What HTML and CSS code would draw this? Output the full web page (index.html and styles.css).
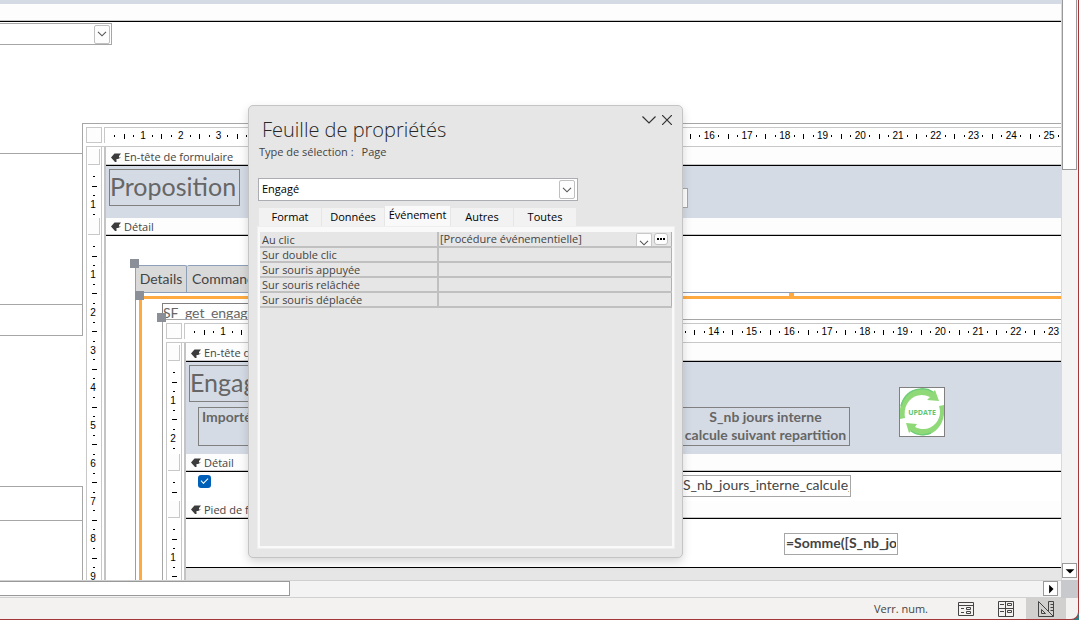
FILE: index.html
```html
<!DOCTYPE html>
<html lang="fr">
<head>
<meta charset="utf-8">
<title>Feuille de propriétés</title>
<link rel="stylesheet" href="styles.css">
</head>
<body>
<svg class="defs" aria-hidden="true">
  <symbol id="chevron" viewBox="0 0 10 6"><path d="M1 .8 5 4.8 9 .8" fill="none" stroke="#555" stroke-width="1.1"/></symbol>
  <symbol id="section-arrow" viewBox="0 0 10 9"><path d="M0 4.500 3.500.500H10L8 3v1.500H10L7 6H5.500V9H4Z" fill="#3c3c3c"/></symbol>
</svg>
<div class="app">
  <div class="workspace">
    <main class="canvas">
      <div class="outer-header"></div>
      <div class="band"></div>
      <div class="outer-body">
        <label class="combo outer-combo"><select aria-label="Filtre"><option></option></select><span class="combo-button"><svg><use href="#chevron"/></svg></span></label>
        <div class="group group-a"></div>
        <div class="group group-b"></div>

        <div class="subform proposition">
          <div class="ruler-row"><div class="corner"></div><div class="h-ruler" data-count="25"></div></div>
          <section class="section first">
            <div class="v-ruler" data-count="1"><div class="selector"></div></div>
            <div class="section-main">
              <div class="band"><svg><use href="#section-arrow"/></svg>En-tête de formulaire</div>
              <div class="section-body tinted header-small">
                <div class="label title-label title-proposition">Proposition</div>
                <input class="field hidden-field" aria-label="Champ">
              </div>
            </div>
          </section>
          <section class="section fill">
            <div class="v-ruler" data-count="9"><div class="selector"></div></div>
            <div class="section-main">
              <div class="band"><svg><use href="#section-arrow"/></svg>Détail</div>
              <div class="section-body">
                <div class="tab-control">
                  <div class="form-tabs"><button>Details</button><button>Commandes</button></div>
                  <div class="tab-page">
                    <div class="label subform-label">SF_get_engagements</div>
                    <div class="subform engage">
                      <div class="ruler-row"><div class="corner"></div><div class="h-ruler" data-count="23"></div></div>
                      <section class="section first">
                        <div class="v-ruler" data-count="2"><div class="selector"></div></div>
                        <div class="section-main">
                          <div class="band"><svg><use href="#section-arrow"/></svg>En-tête de formulaire</div>
                          <div class="section-body tinted header-large">
                            <div class="label title-label title-engage">Engagé</div>
                            <div class="label bold-label imported">Importé</div>
                            <div class="label bold-label days">S_nb jours interne<br>calcule suivant repartition</div>
                            <button class="update" aria-label="Update">
                              <svg viewBox="0 0 44 48">
                                <path d="M0 31C-2 14 6 2 20 1 26 0 30 2 33 4L35 2 39 13 27 12 30 9C22 5 14 7 9 13 5 18 4 24 5 30Z" fill="#8fd978"/>
                                <path d="M44 17C46 33 38 45 26 47 19 48 14 46 11 43L9 45 6 35 17 36 15 39C23 43 31 41 36 35 40 30 41 24 39 18Z" fill="#8fd978"/>
                                <path d="M1 18C4 7 11 2 20 1 26 0 30 2 33 4M11 43C16 47 24 48 31 45" fill="none" stroke="#70ce7b" stroke-width="1.5"/>
                                <text x="22" y="27">UPDATE</text>
                              </svg>
                            </button>
                          </div>
                        </div>
                      </section>
                      <section class="section">
                        <div class="v-ruler" data-count="0"><div class="selector"></div></div>
                        <div class="section-main">
                          <div class="band"><svg><use href="#section-arrow"/></svg>Détail</div>
                          <div class="section-body detail-small">
                            <input type="checkbox" class="check" checked aria-label="Importé">
                            <input class="field days-field" value="S_nb_jours_interne_calcule_repartition" aria-label="Jours interne">
                          </div>
                        </div>
                      </section>
                      <section class="section fill">
                        <div class="v-ruler" data-count="1"><div class="selector"></div></div>
                        <div class="section-main past-end">
                          <div class="band"><svg><use href="#section-arrow"/></svg>Pied de formulaire</div>
                          <div class="section-body footer-body">
                            <input class="field sum-field" value="=Somme([S_nb_jours_interne])" aria-label="Somme">
                          </div>
                        </div>
                      </section>
                    </div>
                  </div>
                  <span class="drop-mark"></span>
                  <span class="handle handle-a"></span><span class="handle handle-b"></span><span class="handle handle-c"></span>
                </div>
              </div>
            </div>
          </section>
        </div>
      </div>
    </main>
    <div class="v-scroll"><div class="v-thumb"></div><button class="scroll-button" aria-label="Défiler vers le bas"><svg viewBox="0 0 8 8"><path d="M.5 2.500h7L4 6Z"/></svg></button></div>
    <div class="h-scroll"><div class="h-thumb"></div><button class="scroll-button" aria-label="Défiler vers la droite"><svg viewBox="0 0 8 8"><path d="M2.500.500v7L6 4Z"/></svg></button></div>
    <div class="scroll-corner"></div>
  </div>
  <footer class="status">
    <span class="status-text">Verr. num.</span>
    <button aria-label="Mode Formulaire"><svg viewBox="0 0 16 16"><path d="M.500 1.500h15v13H.500ZM.500 4.500h15M3 7.500h3M3 11.500h3M8.500 6.500h4v2h-4ZM8.500 10.500h4v2h-4Z"/></svg></button>
    <button aria-label="Mode Page"><svg viewBox="0 0 16 16"><path d="M.500.500h15v15H.500ZM7.500.500v15M.500 7.500h15M2 3.500h4M2 10.500h4M9.500 2.500h4v2h-4ZM9.500 9.500h4v2h-4Z"/></svg></button>
    <button class="active" aria-label="Mode Création"><svg viewBox="0 0 16 16"><path d="M.500.500v15h15ZM3.500 8.500v4h4ZM10.500 10V.500h5v15M12.500 3.500h3M12.500 6.500h3M12.500 9.500h3"/></svg></button>
  </footer>

  <div class="sheet" role="dialog" aria-labelledby="sheet-title">
    <div class="sheet-head">
      <h1 id="sheet-title">Feuille de propriétés</h1>
      <button aria-label="Options"><svg class="head-chevron" viewBox="0 0 14 8"><path d="M.500.500 7 7 13.500.500"/></svg></button>
      <button aria-label="Fermer"><svg class="head-close" viewBox="0 0 10 10"><path d="M0 0 10 10M10 0 0 10"/></svg></button>
    </div>
    <p class="selection"><span>Type de sélection :</span><span>Page</span></p>
    <label class="combo sheet-combo"><select aria-label="Objet"><option>Engagé</option></select><span class="combo-button"><svg><use href="#chevron"/></svg></span></label>
    <div class="sheet-tabs" role="tablist">
      <button role="tab">Format</button><button role="tab">Données</button><button role="tab" class="active" aria-selected="true">Événement</button><button role="tab">Autres</button><button role="tab">Toutes</button>
    </div>
    <div class="panel">
      <table class="properties">
        <tr><th scope="row"><label for="p1">Au clic</label></th><td><div class="value"><input id="p1" value="[Procédure événementielle]"><button class="value-drop" aria-label="Choisir"><svg><use href="#chevron"/></svg></button><button class="value-more" aria-label="Générateur"><i></i><i></i><i></i></button></div></td></tr>
        <tr><th scope="row"><label for="p2">Sur double clic</label></th><td><div class="value"><input id="p2"></div></td></tr>
        <tr><th scope="row"><label for="p3">Sur souris appuyée</label></th><td><div class="value"><input id="p3"></div></td></tr>
        <tr><th scope="row"><label for="p4">Sur souris relâchée</label></th><td><div class="value"><input id="p4"></div></td></tr>
        <tr><th scope="row"><label for="p5">Sur souris déplacée</label></th><td><div class="value"><input id="p5"></div></td></tr>
      </table>
    </div>
  </div>
</div>
<script src="rulers.js"></script>
</body>
</html>
```

FILE: rulers.js
```javascript
// Fills each ruler with quarter-centimetre marks and a number per centimetre.
document.querySelectorAll('[data-count]').forEach(function (ruler) {
  var count = Number(ruler.dataset.count);
  var marks = document.createElement('div');
  marks.className = 'marks';
  for (var q = 1; q <= count * 4 + 3; q++) {
    var mark = document.createElement('span');
    if (q % 4 === 0) {
      mark.className = 'number';
      mark.textContent = q / 4;
    } else {
      mark.className = q % 4 === 2 ? 'half' : 'quarter';
    }
    marks.appendChild(mark);
  }
  ruler.appendChild(marks);
});
```

FILE: styles.css
```css
* { box-sizing: border-box; }
body {
  margin: 0;
  background: #2f7f86;
  font: 11px/16px "Open Sans", "Noto Sans", sans-serif;
  color: #444;
}
button, input, select { font: inherit; color: inherit; margin: 0; padding: 0; border: 0; background: none; border-radius: 0; outline: 0; }
button { display: flex; align-items: center; justify-content: center; }
.defs { position: absolute; width: 0; height: 0; }

.app {
  position: relative;
  display: flex;
  flex-direction: column;
  height: 100vh;
  overflow: hidden;
  border: solid #a4373a;
  border-width: 0 1px 1px 0;
  border-radius: 0 0 8px 0;
  background: #f3f2f1;
}
.workspace { flex: 1; min-height: 0; display: grid; grid-template: minmax(0, 1fr) 18px / minmax(0, 1fr) 17px; }
.canvas { display: flex; flex-direction: column; overflow: hidden; background: #fff; }
.outer-header { height: 4px; flex: none; background: #d5dbe5; }
.outer-body { position: relative; flex: 1; }
.band {
  flex: none;
  display: flex;
  align-items: center;
  gap: 3px;
  height: 18px;
  padding-left: 5px;
  background: linear-gradient(#c8c8c8, #c8c8c8) bottom / 100% 1px no-repeat #fdfdfd;
  border-bottom: 1px solid #000;
  white-space: nowrap;
}
.band svg { width: 10px; height: 9px; }

.combo { display: flex; align-items: center; border: 1px solid #a6a6a6; background: #fff; padding-right: 2px; }
.combo select { flex: 1; min-width: 0; height: 20px; appearance: none; }
.combo-button { display: flex; align-items: center; justify-content: center; width: 16px; height: 19px; border: 1px solid #c0c0c0; border-radius: 2px; background: #fdfdfd; }
.combo-button svg { width: 10px; height: 6px; }
.outer-combo { position: absolute; left: -1px; top: 1px; width: 113px; height: 22px; padding-right: 1px; }
.group { position: absolute; z-index: 1; left: 0; width: 83px; border: solid #a6a6a6; border-width: 1px 1px 0 0; }
.group::after { content: ""; display: block; border-bottom: 1px solid #a6a6a6; }
.group-a { top: 131px; height: 183px; border-bottom-width: 1px; }
.group-a::after { height: 150px; }
.group-b { top: 464px; bottom: 0; }
.group-b::after { height: 33px; }

.subform { position: absolute; right: 0; bottom: 0; display: flex; flex-direction: column; overflow: hidden; border: solid #a6a6a6; border-width: 1px 0 0 1px; padding: 3px 0 0 3px; background: #fff; }
.proposition { left: 82px; top: 101px; border-left: 0; padding-left: 4px; }
.proposition::after { content: ""; position: absolute; left: 0; top: 0; height: 30px; border-left: 1px solid #a6a6a6; }
.engage { left: 20px; top: 20px; }
.ruler-row { display: flex; gap: 2px; flex: none; height: 19px; }
.corner { width: 16px; height: 16px; border: 1px solid #c8c8c8; background: #fdfdfd; }
.h-ruler { flex: 1; min-width: 0; height: 16px; overflow: hidden; border: solid #c8c8c8; border-width: 1px 0 0 1px; }
.marks { display: flex; font: 10px/10px "Liberation Sans", Arial, sans-serif; color: #000; }
.marks span { flex: none; display: flex; align-items: center; justify-content: center; }
.h-ruler .marks { height: 16px; padding-left: 5px; }
.h-ruler .marks span { width: .25cm; }
.quarter::before, .half::before { content: ""; background: #000; }
.h-ruler .quarter::before { width: 1px; height: 2px; }
.h-ruler .half::before { width: 1px; height: 5px; }
.section { position: relative; display: flex; gap: 2px; flex: none; }
.first { border-top: 1px solid #c8c8c8; }
.first .band { height: 19px; padding-top: 2px; }
.fill { flex: 1; min-height: 0; }
.v-ruler { flex: none; width: 16px; overflow: hidden; contain: size; border: solid #c8c8c8; border-width: 0 1px; background: #fff; }
.selector { width: 12px; height: 17px; margin: 0 auto 0 1px; border: solid #c8c8c8; border-width: 0 1px 1px 0; background: #fdfdfd; }
.first .selector { height: 16px; margin-top: 2px; }
.v-ruler .marks { flex-direction: column; padding-top: 7px; }
.v-ruler .marks span { height: .25cm; width: 14px; }
.v-ruler .marks .number { padding-right: 2px; }
.v-ruler .quarter::before { width: 2px; height: 1px; }
.v-ruler .half::before { width: 5px; height: 1px; }
.section-main { flex: 1; min-width: 0; display: flex; flex-direction: column; border-left: 2px solid #c4c4c4; background: #fff; }
.section-body { position: relative; flex: 1 0 auto; }
.past-end { background: #e6e6e6; }
.tinted { background: #d5dbe5; }
.header-small { height: 52px; }
.header-large { height: 92px; }
.detail-small { height: 29px; }
.footer-body { flex: none; height: 49px; border-bottom: 1px solid #000; background: #fff; }

.label { position: absolute; border: 1px solid #808080; color: #666; white-space: nowrap; overflow: hidden; }
.title-label { left: 3px; top: 3px; height: 37px; font: 25px/32px Lato, sans-serif; }
.title-proposition { width: 131px; }
.title-engage { width: 160px; }
.bold-label { top: 45px; height: 39px; font: bold 14px/18px Lato, sans-serif; text-align: center; }
.imported { left: 12px; width: 72px; text-align: left; padding-left: 3px; }
.days { left: 495px; width: 169px; }
.field { position: absolute; border: 1px solid #a6a6a6; background: #fff; font: 14px/18px Lato, sans-serif; }
.hidden-field { left: 502px; top: 22px; width: 80px; height: 20px; }
.days-field { left: 494px; top: 3px; width: 171px; height: 22px; padding: 0 1px 3px 2px; }
.sum-field { left: 598px; top: 14px; width: 114px; height: 22px; padding: 0 1px 3px; font-weight: bold; }
.update { position: absolute; left: 713px; top: 25px; width: 46px; height: 50px; border: 1px solid #808080; background: #fff; }
.update svg { width: 44px; height: 48px; }
.update text { font: bold 7px "Open Sans", sans-serif; fill: #5cc571; text-anchor: middle; }
.check { position: absolute; left: 12px; top: 3px; width: 13px; height: 13px; appearance: none; border-radius: 3px; background: #005fb8; }
.check::after { content: ""; position: absolute; left: 3px; top: 3px; width: 6px; height: 3px; border: solid #fff; border-width: 0 0 1px 1px; transform: rotate(-45deg); }

.tab-control { position: absolute; left: 29px; top: 29px; right: 0; bottom: 0; border-left: 1px solid #8ea0b8; }
.form-tabs { display: flex; height: 28px; margin-left: -1px; border-bottom: 1px solid #8ea0b8; font: 14px/18px Lato, sans-serif; }
.form-tabs button { padding: 0 5px; border: solid #8ea0b8; border-width: 1px 1px 0 0; border-radius: 2px 2px 0 0; background: #d9d9d9; }
.form-tabs button:first-child { width: 52px; border-left-width: 1px; }
.tab-page { position: absolute; left: 3px; top: 31px; right: 0; bottom: 0; border: solid #ffaa40; border-width: 3px 0 0 3px; }
.subform-label { left: 20px; top: 4px; width: 130px; height: 17px; font: 14px/18px Lato, sans-serif; }
.drop-mark { position: absolute; left: 653px; top: 28px; width: 5px; height: 4px; background: #ffaa40; }
.handle { position: absolute; width: 9px; height: 9px; background: #8a8f98; }
.handle-a { left: -6px; top: -6px; }
.handle-b { left: -1px; top: 26px; }
.handle-c { left: 21px; top: 48px; }

.v-scroll { display: flex; flex-direction: column; justify-content: space-between; padding: 0 1px 2px 0; border-left: 1px solid #d9d9d9; background: #f3f3f3; }
.v-thumb { height: 170px; border: solid #999; border-width: 0 1px 1px; background: #fff; }
.scroll-button { width: 15px; height: 15px; border: 1px solid #999; background: #fff; }
.scroll-button svg { width: 10px; height: 10px; fill: #000; }
.h-scroll { display: flex; justify-content: space-between; padding: 0 3px 0 0; border: solid #d0d0d0; border-width: 1px 0; background: #f3f3f3; }
.h-thumb { width: 290px; height: 15px; border: 1px solid #999; border-left: 0; background: #fff; }
.scroll-corner { background: #c8c9cc; }
.status { display: flex; justify-content: flex-end; align-items: center; flex: none; height: 21px; padding-right: 12px; }
.status-text { padding-right: 18px; }
.status button { width: 40px; height: 21px; }
.status .active { background: #d2d0ce; }
.status svg { width: 16px; height: 16px; fill: none; stroke: #444; }

.sheet { position: absolute; z-index: 2; left: 248px; top: 105px; display: flex; flex-direction: column; width: 435px; height: 453px; padding: 6px 7px 8px 8px; border: 1px solid #c4c4c4; border-radius: 5px; background: #e6e6e6; box-shadow: 0 4px 10px rgba(0, 0, 0, .16); }
.sheet-head { display: flex; align-items: flex-start; height: 32px; padding-left: 5px; margin-right: -1px; }
.sheet-head h1 { flex: 1; margin: 0; padding-top: 2px; font: 300 20px/32px "Open Sans", sans-serif; color: #262626; }
.sheet-head button { width: 18px; height: 16px; }
.sheet-head svg { fill: none; stroke: #333; stroke-width: 1.2; }
.head-chevron { width: 14px; height: 8px; }
.head-close { width: 10px; height: 10px; }
.selection { display: flex; gap: 8px; margin: 0 0 18px 2px; }
.sheet-combo { height: 23px; width: 320px; margin: 0 0 5px 1px; padding-left: 3px; border-color: #abadb3; color: #000; font-weight: 500; }
.sheet-combo select { padding-bottom: 2px; }
.sheet-tabs { display: flex; align-items: flex-end; gap: 1px; height: 20px; margin-left: 2px; color: #000; font-weight: 500; }
.sheet-tabs button { width: 62px; height: 18px; background: #f2f2f2; }
.sheet-tabs .active { width: 65px; height: 20px; padding: 0 0 2px; background: #f9f9f9; }
.panel { flex: 1; border: solid #f9f9f9; border-width: 6px 3px 3px; outline: 1px solid #efefef; outline-offset: -1px; }
.properties { width: 100%; border-collapse: collapse; table-layout: fixed; }
.properties th { width: 178px; padding: 0 0 0 2px; font-weight: 400; text-align: left; line-height: 13px; border-right: 2px solid #c0c0c0; }
.properties td { padding: 0; border-right: 1px solid #b0b0b0; }
.properties tr { height: 15px; border-bottom: 2px solid #c0c0c0; }
.value { display: flex; height: 13px; padding-left: 1px; }
.value input { flex: 1; min-width: 0; height: 13px; }
.value-drop { width: 16px; height: 13px; border: 1px solid #c8c8c8; border-bottom: 0; border-radius: 2px 2px 0 0; background: #fdfdfd; align-items: flex-end; }
.value-drop svg { width: 10px; height: 6px; }
.value-more { width: 14px; height: 12px; gap: 1px; margin: 0 3px 0 2px; border: 1px solid #c0c0c0; border-radius: 3px; background: #fdfdfd; }
.value-more i { width: 2px; height: 2px; background: #000; }
```
